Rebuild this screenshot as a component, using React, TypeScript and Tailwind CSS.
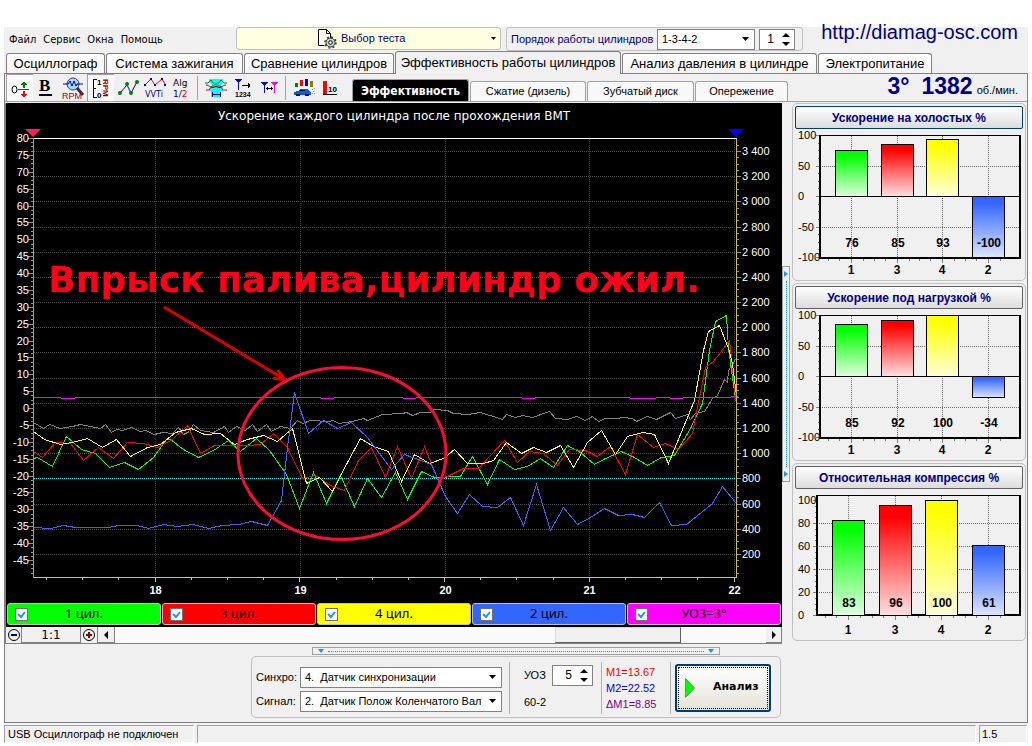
import { useState } from "react";
import type { ReactNode } from "react";
import clsx from "clsx";

const mainTabs = [
  { title: "Осциллограф", width: "w-[99px]" },
  { title: "Система зажигания", width: "w-[137px]" },
  { title: "Сравнение цилиндров", width: "w-[150px]" },
  { title: "Эффективность работы цилиндров", width: "w-[226px]" },
  { title: "Анализ давления в цилиндре", width: "w-[195px]" },
  { title: "Электропитание", width: "w-[114px]" },
];

const subTabs = [
  { title: "Эффективность", width: "w-[117px]" },
  { title: "Сжатие (дизель)", width: "w-[116px]" },
  { title: "Зубчатый диск", width: "w-[107px]" },
  { title: "Опережение", width: "w-[93px]" },
];

const channels = [
  { label: "1 цил.", color: "bg-[#00ff00]" },
  { label: "3 цил.", color: "bg-[#ff0000]" },
  { label: "4 цил.", color: "bg-[#ffff00]" },
  { label: "2 цил.", color: "bg-[#3366ff]" },
  { label: "УОЗ=3°", color: "bg-[#ff00ff]" },
];

const traces = [
  {
    color: "#808080",
    points:
      "33,422 43,428 49,424 60,428 72,426 80,424 100,428 105,424 111,432 116,429 122,430 131,427 140,431 145,430 154,434 162,432 172,433 178,427 183,434 189,431 193,424 200,430 213,432 224,426 228,432 236,426 245,430 252,424 257,431 266,424 271,431 280,426 290,428 297,420 302,423 310,420 328,421 333,420 338,423 352,421 363,418 367,420 382,414 402,413 406,412 412,415 420,412 430,412 433,409 447,410 453,413 467,414 480,412 499,418 502,419 506,414 515,417 522,415 532,417 549,411 555,418 567,419 576,416 585,420 592,416 598,421 605,418 617,418 622,417 632,418 636,421 647,416 656,419 670,412 675,418 687,414 690,419 695,413 704,411 712,398 717,395 724,379 727,382 728,370 735,359",
  },
  {
    color: "#00ff00",
    points:
      "33,458 37,457 52,466 66,436 81,449 95,453 109,467 124,462 138,469 153,457 166,439 170,439 183,449 198,457 213,450 228,440 240,451 256,438 269,450 286,474 299,508 313,472 326,503 340,475 354,506 367,478 381,497 395,472 407,499 421,471 434,477 460,476 472,456 487,484 499,459 514,469 527,466 540,458 553,467 567,445 580,452 594,464 605,458 621,451 634,457 647,465 661,457 674,455 690,428 702,403 709,350 715,321 726,315 728,348 735,398",
  },
  {
    color: "#ff0000",
    points:
      "33,451 42,457 55,442 70,443 83,460 98,447 113,458 127,442 143,443 157,447 172,439 187,425 200,453 214,445 247,445 260,444 273,433 287,447 302,478 315,475 330,485 344,490 358,460 371,447 385,477 397,446 411,478 424,446 437,478 447,476 463,468 478,468 490,455 504,440 517,462 529,451 543,453 557,465 569,449 585,450 597,456 610,446 625,474 637,434 653,447 665,443 678,449 692,433 697,407 705,367 713,361 720,352 729,340 736,405",
  },
  {
    color: "#ffff00",
    points:
      "33,431 44,439 60,444 72,442 87,438 102,447 116,439 130,456 147,447 160,444 175,432 191,428 204,434 220,433 234,444 247,439 263,435 277,441 292,428 306,483 319,477 332,491 347,462 360,438 373,446 388,451 401,481 414,454 429,463 443,458 454,449 467,463 483,463 493,460 506,442 521,453 533,447 546,452 560,445 573,467 587,442 601,430 615,454 627,436 642,432 654,434 668,463 694,400 703,350 708,331 719,325 728,348 732,363 736,395",
  },
  {
    color: "#3366ff",
    points:
      "33,527 50,528 63,525 75,527 108,527 118,525 137,525 148,528 163,524 177,526 193,524 208,528 222,525 238,524 251,521 267,525 281,500 287,447 294,392 308,433 323,420 337,428 351,422 367,437 391,469 404,454 431,464 445,496 457,513 469,494 482,506 497,507 510,497 523,525 536,484 550,530 563,507 577,524 590,517 604,508 618,515 632,514 644,517 659,502 671,525 686,524 712,503 722,486 736,503",
  },
  {
    color: "#ff00ff",
    points:
      "33,397 60,397 61,398 74,398 75,397 320,397 321,398 333,398 334,397 402,397 403,398 415,398 416,397 521,397 522,398 534,398 535,397 629,397 630,398 655,398 656,397 669,397 670,398 682,398 683,397 730,397 731,396 737,396",
  },
];

const leftTicks = Array.from({ length: 26 }, (_, i) => 80 - i * 5);
const rightTicks = Array.from({ length: 17 }, (_, i) => 3400 - i * 200);
const seconds = [18, 19, 20, 21, 22];

const leftY = (value: number) => Math.round(138 + (80 - value) * 3.376) + 0.5;
const rightY = (value: number) => Math.round(151 + (3400 - value) * 0.1259) + 0.5;
const secondX = (value: number) => Math.round(155 + (value - 18) * 144.75) + 0.5;

function formatRpm(value: number) {
  return value >= 1000
    ? `${Math.floor(value / 1000)} ${String(value % 1000).padStart(3, "0")}`
    : String(value);
}

function MainChart() {
  return (
    <svg
      viewBox="6 103 776 499"
      className="block w-full h-auto bg-black font-['Liberation_Sans',sans-serif]"
      role="img"
      aria-label="Ускорение каждого цилиндра после прохождения ВМТ"
    >
      <text
        x="394"
        y="120"
        textAnchor="middle"
        fill="#fff"
        className="text-[12px] font-['DejaVu_Sans',sans-serif]"
      >
        Ускорение каждого цилиндра после прохождения ВМТ
      </text>

      {/* grid */}
      <g strokeDasharray="1 1">
        {rightTicks.map((v) => (
          <line key={v} x1="34" x2="736" y1={rightY(v)} y2={rightY(v)} stroke="#505050" />
        ))}
        {seconds.map((v) => (
          <line key={v} x1={secondX(v)} x2={secondX(v)} y1="139" y2="577" stroke="#383838" />
        ))}
      </g>
      <line x1="34" x2="736" y1="478.5" y2="478.5" stroke="#00ffff" strokeDasharray="1 1" />

      {/* axis ticks */}
      <g stroke="#909090">
        {leftTicks.map((v) => (
          <line key={v} x1="28" x2="33" y1={leftY(v)} y2={leftY(v)} />
        ))}
        {Array.from({ length: 104 }, (_, i) => 80 - i * 1.25).map((v) => (
          <line key={v} x1="31" x2="33" y1={leftY(v)} y2={leftY(v)} />
        ))}
        {rightTicks.map((v) => (
          <line key={v} x1="737" x2="741" y1={rightY(v)} y2={rightY(v)} />
        ))}
        {Array.from({ length: 69 }, (_, i) => 3450 - i * 50).map((v) => (
          <line key={v} x1="737" x2="739" y1={rightY(v)} y2={rightY(v)} />
        ))}
      </g>
      <g fill="#fff" className="text-[11px]">
        {leftTicks.map((v) => (
          <text key={v} x="29" y={leftY(v) + 3.5} textAnchor="end">
            {v}
          </text>
        ))}
        {rightTicks.map((v) => (
          <text key={v} x="742" y={rightY(v) + 3.5}>
            {formatRpm(v)}
          </text>
        ))}
      </g>

      {traces.map((trace) => (
        <polyline
          key={trace.color}
          points={trace.points}
          fill="none"
          stroke={trace.color}
          transform="translate(.5 .5)"
          shapeRendering="crispEdges"
        />
      ))}

      {/* frame and markers */}
      <line x1="33" x2="737" y1="138.5" y2="138.5" stroke="#fff" />
      <line x1="33" x2="737" y1="577.5" y2="577.5" stroke="#c0c0c0" />
      <line x1="33.5" x2="33.5" y1="138" y2="578" stroke="#40d090" />
      <line x1="736.5" x2="736.5" y1="138" y2="578" stroke="#d0c040" />
      <path d="M25 129h16l-8 8z" fill="#ff1f5a" />
      <path d="M728 129h16l-8 8z" fill="#0000ff" />
      <g stroke="#c0c0c0">
        {Array.from({ length: 20 }, (_, i) => 46.5 + Math.round(i * 36.19)).map((x, i) => (
          <line key={x} x1={x} x2={x} y1="578" y2={i % 4 === 3 ? 582 : 580} />
        ))}
      </g>
      <g fill="#fff" textAnchor="middle" className="text-[11px] font-bold">
        {seconds.map((v) => (
          <text key={v} x={secondX(v)} y="594">
            {v}
          </text>
        ))}
      </g>

      {/* annotation */}
      <text
        x="48"
        y="292"
        fill="#ff0018"
        className="text-[36px] font-bold font-['DejaVu_Sans',sans-serif]"
      >
        Впрыск палива,цилиндр ожил.
      </text>
      <path d="M164 307 284 379M273 378l12 2-7-10" fill="none" stroke="#d80000" strokeWidth="3" />
      <ellipse cx="342" cy="453.5" rx="104" ry="86" fill="none" stroke="#ff0a35" strokeWidth="3" />
    </svg>
  );
}

const cylinders = [
  { name: "1", color: "#00ff00", fade: "#e0ffe0" },
  { name: "3", color: "#ff0000", fade: "#ffe0e0" },
  { name: "4", color: "#ffff00", fade: "#ffffd8" },
  { name: "2", color: "#3366ff", fade: "#dde6ff" },
];

type BarPanelProps = {
  id: string;
  title: string;
  values: number[];
  signed?: boolean;
  active?: boolean;
};

function BarPanel({ id, title, values, signed, active }: BarPanelProps) {
  const left = signed ? 25 : 22;
  const bottom = signed ? 127 : 124;
  const zero = signed ? 65 : 124;
  const scale = signed ? 0.61 : 1.15;
  const centers = signed ? [56, 102, 147, 193] : [53, 100, 146, 193];
  const ticks = signed ? [100, 50, 0, -50, -100] : [100, 80, 60, 40, 20, 0];
  const minor = signed ? 12.5 : 5;
  const minorTicks = Array.from({ length: signed ? 17 : 21 }, (_, i) => 100 - i * minor);
  const y = (v: number) => Math.round(zero - v * scale) + 0.5;

  return (
    <section className="border border-[#c0c0c0] rounded-[5px] px-[2px] pt-[2px] h-[178px]">
      <button
        className={clsx(
          "block w-full h-[23px] border rounded-[2px] bg-gradient-to-b from-white to-[#dcdcdc]",
          "font-bold text-[12px] leading-[20px] text-[#000080]",
          active ? "border-[#003c74]" : "border-[#606060]",
        )}
      >
        {title}
      </button>
      <svg
        viewBox="0 -2 228 149"
        className="block w-full h-auto overflow-visible"
        role="img"
        aria-label={title}
      >
        <defs>
          {cylinders.map((c) => (
            <linearGradient key={c.name} id={`${id}-${c.name}`} x1="0" x2="0" y1="0" y2="1">
              <stop offset="0.1" stopColor={c.color} />
              <stop offset="1" stopColor={c.fade} />
            </linearGradient>
          ))}
        </defs>
        <g stroke="#707070" strokeDasharray="1 1">
          {ticks.slice(1).map((v) => (
            <line key={v} x1={left} x2="226" y1={y(v)} y2={y(v)} />
          ))}
          {centers.map((x) => (
            <line key={x} x1={x + 0.5} x2={x + 0.5} y1="5" y2={bottom} />
          ))}
        </g>
        <g stroke="#808080">
          {ticks.map((v) => (
            <line key={v} x1={left - 4} x2={left} y1={y(v)} y2={y(v)} />
          ))}
          {minorTicks.map((v) => (
            <line key={v} x1={left - 2} x2={left} y1={y(v)} y2={y(v)} />
          ))}
          {centers.map((x) => (
            <path
              key={x}
              d={`M${x + 0.5} ${bottom}v5M${x - 11.5} ${bottom}v3M${x + 12.5} ${bottom}v3M${x - 22.5} ${bottom}v3`}
            />
          ))}
        </g>
        <path d={`M${left} 4.5H226`} stroke="#000" />
        <path d={`M${left} 4V${bottom}M${left - 1} ${bottom}H226M225 4V${bottom + 1}`} stroke="#000" strokeWidth="2" />
        {signed && <path d={`M${left} ${y(0)}H225`} stroke="#000" />}
        {values.map((v, i) => (
          <rect
            key={cylinders[i].name}
            x={centers[i] - 15.5}
            y={v < 0 ? y(0) : y(v)}
            width="32"
            height={Math.abs(y(v) - y(0))}
            fill={`url(#${id}-${cylinders[i].name})`}
            stroke="#000"
          />
        ))}
        <g className="text-[11px]">
          {ticks.map((v) => (
            <text key={v} x="3" y={y(v) + 3.5}>
              {v}
            </text>
          ))}
        </g>
        <g textAnchor="middle" className="text-[12px] font-bold">
          {values.map((v, i) => (
            <text key={i} x={centers[i] + 1} y="116">
              {v}
            </text>
          ))}
          {cylinders.map((c, i) => (
            <text key={c.name} x={centers[i]} y="143">
              {c.name}
            </text>
          ))}
        </g>
      </svg>
    </section>
  );
}

function ToolButton({
  label,
  pressed,
  children,
}: {
  label: string;
  pressed?: boolean;
  children: ReactNode;
}) {
  return (
    <button
      aria-label={label}
      className={clsx(
        "w-[27px] h-[27px] shrink-0 flex items-center justify-center",
        pressed && "bg-[#fafafa] border-t border-l border-[#a0a0a0]",
      )}
    >
      <svg viewBox="0 0 24 24" className="size-6" fill="none" stroke="#000" shapeRendering="crispEdges">
        {children}
      </svg>
    </button>
  );
}

function Toolbar() {
  return (
    <div className="flex items-center">
      <ToolButton label="Ноль" pressed>
        <ellipse cx="6.500" cy="13.500" rx="2.500" ry="3.500" shapeRendering="auto" />
        <path d="M10 13.500h11" stroke="#404040" />
        <path d="M15 12h2V9h2V8h-1V7h-1V6h-2v1h-1v1h-1v1h2z" fill="#008000" stroke="none" />
        <path d="M15 15h2v3h2v1h-1v1h-1v1h-2v-1h-1v-1h-1v-1h2z" fill="#f00" stroke="none" />
      </ToolButton>
      <ToolButton label="Жирные линии">
        <text x="4" y="15" fill="#000" stroke="none" className="text-[17px] font-bold font-['Liberation_Serif',serif]">
          B
        </text>
        <path d="M4 19h13" strokeWidth="2" />
      </ToolButton>
      <ToolButton label="Лупа RPM">
        <g shapeRendering="auto">
          <circle cx="11" cy="8" r="6" fill="#a0d8ff" stroke="#404060" />
          <path d="m15 12 6 7" stroke="#333" strokeWidth="3" />
          <path d="M1 8h5l2-3 2 5 2-5 2 5 1-2h6" stroke="#0000a0" />
        </g>
        <text x="0" y="23" fill="#a00000" stroke="none" className="text-[9px]">
          RPM
        </text>
      </ToolButton>
      <ToolButton label="Шкала RPM" pressed>
        <path d="M8 3.500H4.500v18H8M4.500 12.500h2" />
        <text x="8" y="9" fill="#000" stroke="none" className="text-[8px] font-bold">
          1
        </text>
        <text x="8" y="22" fill="#000" stroke="none" className="text-[8px] font-bold">
          0
        </text>
        <text
          transform="translate(14 3) rotate(90)"
          fill="#900000"
          stroke="none"
          className="text-[8px] font-bold"
        >
          RPM
        </text>
      </ToolButton>
      <ToolButton label="Точки">
        <path d="M4 17 11 9l4 8 6-11" stroke="#0000c0" shapeRendering="auto" />
        <g fill="#008000" stroke="none" shapeRendering="auto">
          <circle cx="4" cy="17" r="2" />
          <circle cx="11" cy="8" r="2" />
          <circle cx="15" cy="17" r="2" />
          <circle cx="21" cy="6" r="2" />
        </g>
      </ToolButton>
      <ToolButton label="VVTi">
        <path d="m2 9 6-6 4 6 7-6 3 5" stroke="#f00" shapeRendering="auto" />
        <path d="M1 9h2M7 3h2M11 9h2M18 3h2M21 9h2" stroke="#0000c0" strokeWidth="2" />
        <text x="2" y="21" fill="#000080" stroke="none" className="text-[9px] font-['DejaVu_Sans_Condensed','DejaVu_Sans',sans-serif]">
          VVTi
        </text>
      </ToolButton>
      <ToolButton label="Алгоритм">
        <text x="3" y="10" fill="#000" stroke="none" className="text-[9px] font-['DejaVu_Sans',sans-serif]">
          Alg
        </text>
        <text x="3" y="21" fill="#000080" stroke="none" className="text-[9px] font-['DejaVu_Sans',sans-serif]">
          1/<tspan fill="#f00">2</tspan>
        </text>
      </ToolButton>
      <div className="w-px h-6 bg-[#a0a0a0] ml-[2px] mr-1" />
      <ToolButton label="Окно фаз">
        <path d="M5 3h14v3l-3 3 3 3v3h-2v6H7v-6H5v-3l3-3-3-3z" fill="#00ffff" stroke="none" />
        <g shapeRendering="auto">
          <path d="M1 7h3l3-3 3 4h4l3-4 3 3h3" stroke="#008000" />
          <path d="M2 14h3l3-4h2l2 1 2-1h2l3 4h4" stroke="#f00" />
          <path d="M2 9c4 0 5 5 10 1 5 4 6-1 10-1" stroke="#800000" />
        </g>
        <path d="M8 18.500h9M8.500 16v5M16.500 16v5" stroke="#0000a0" />
      </ToolButton>
      <ToolButton label="Нумерация">
        <path d="M4 3.500h7M5 4.500h5M6 5.500h3M7.500 5v9" stroke="#00f" />
        <path d="M11 9.500h8M17.500 7v5M18.500 8v3" />
        <text x="4" y="21" fill="#000" stroke="none" className="text-[7px] font-bold">
          1234
        </text>
      </ToolButton>
      <ToolButton label="Интервал">
        <path d="M3 6.500h7M4 7.500h5M5 8.500h3M6.500 7v10" stroke="#00f" />
        <path d="M13 6.500h7M14 7.500h5M15 8.500h3M16.500 7v10" stroke="#f0f" />
        <path d="M8 12.500h7M9.500 11v3M13.500 11v3" />
      </ToolButton>
      <div className="w-px h-6 bg-[#a0a0a0] ml-[2px] mr-1" />
      <ToolButton label="Разгон">
        <g stroke="none">
          <path d="M3 7h3v4H3z" fill="#008000" />
          <path d="M8 4h3v6H8z" fill="#f00" />
          <path d="M13 3h3v7h-3z" fill="#00f" />
          <path d="M18 5h3v6h-3z" fill="#808000" />
          <path d="M2 16l4-1 2-2h7l3 3h1v3H2z" fill="#0060e0" />
          <path d="M4 18h4v2H4zM13 18h4v2h-4zM8 14h5v1H8z" fill="#000040" />
          <path d="M20 13h1v1h-1zM22 12h1v1h-1zM21 15h1v1h-1zM20 17h1v1h-1zM22 17h1v1h-1z" fill="#909090" />
        </g>
      </ToolButton>
      <ToolButton label="Уровень">
        <path d="M4 5h4v13H4z" fill="#f00" stroke="none" />
        <path d="M4 18.500h14" />
        <text x="9" y="16" fill="#000" stroke="none" className="text-[8px] font-bold">
          10
        </text>
      </ToolButton>
    </div>
  );
}

function SelectBox({
  id,
  options,
  className,
}: {
  id: string;
  options: string[];
  className: string;
}) {
  return (
    <div className={clsx("relative", className)}>
      <select
        id={id}
        className="appearance-none w-full h-full border border-[#828282] bg-white pl-1 pr-[18px] text-[11px] overflow-hidden text-clip"
      >
        {options.map((option) => (
          <option key={option}>{option}</option>
        ))}
      </select>
      <svg viewBox="0 0 7 4" className="absolute right-[6px] top-2 w-[7px] h-1 pointer-events-none">
        <path d="M0 0h7L3.500 4z" />
      </svg>
    </div>
  );
}

function Spinner({ id, value, label, className }: { id?: string; value: string; label?: string; className: string }) {
  return (
    <div className={clsx("flex border border-[#828282] bg-white items-center pr-1", className)}>
      <input
        id={id}
        aria-label={label}
        defaultValue={value}
        className="min-w-0 flex-1 bg-transparent text-right pr-2 text-[12px]"
      />
      <div className="flex flex-col gap-1">
        <button type="button" aria-label="Больше" className="h-[5px] flex items-center">
          <svg viewBox="0 0 8 4" className="w-2 h-1">
            <path d="M0 4h8L4 0z" />
          </svg>
        </button>
        <button type="button" aria-label="Меньше" className="h-[5px] flex items-center">
          <svg viewBox="0 0 8 4" className="w-2 h-1">
            <path d="M0 0h8L4 4z" />
          </svg>
        </button>
      </div>
    </div>
  );
}

function ZoomIcon({ plus }: { plus?: boolean }) {
  return (
    <svg viewBox="0 0 14 14" className="size-[14px]" fill="none">
      <circle cx="7" cy="7" r="5.500" stroke="#000" />
      <path
        d={plus ? "M4 7h6M7 4v6" : "M4 7h6"}
        stroke={plus ? "#800000" : "#000080"}
        strokeWidth="2"
      />
    </svg>
  );
}

export default function App() {
  const [tab, setTab] = useState(3);
  const [subTab, setSubTab] = useState(0);

  return (
    <div className="bg-white pt-[27px] pb-1 px-1 font-['Liberation_Sans',Arial,sans-serif] text-black">
      <div className="bg-[#f0f0f0]">
        <header className="flex h-6 text-[11px]">
          <nav className="flex items-center gap-[7px] pl-[5px] pt-[3px] w-[232px] font-['DejaVu_Sans_Condensed','DejaVu_Sans',sans-serif]">
            <button>Файл</button>
            <button>Сервис</button>
            <button>Окна</button>
            <button>Помощь</button>
          </nav>
          <button className="flex items-center w-[265px] h-[23px] border border-[#c0c0c0] rounded-[3px] bg-[#ffffe1] pl-20 pr-1 text-[11px] text-[#000080]">
            <svg viewBox="0 0 20 20" className="size-5 mr-1" fill="none" stroke="#000">
              <path d="M1.500.5h8l4 4v6M1.500.5v16h6M9.500.5v4h4" fill="#fff" />
              <circle cx="13.500" cy="13.500" r="4.500" fill="#c8d0c8" stroke="#333" />
              <circle cx="13.500" cy="13.500" r="5.500" strokeDasharray="2 2.300" stroke="#333" strokeWidth="1.500" />
              <circle cx="13.500" cy="13.500" r="1.800" fill="#fff" />
            </svg>
            Выбор теста
            <svg viewBox="0 0 5 3" className="w-[5px] h-[3px] ml-auto">
              <path d="M0 0h5L2.500 3z" />
            </svg>
          </button>
          <div className="flex items-center w-[297px] h-6 ml-[5px] border border-[#c0c0c0] rounded-[3px] pl-1 text-[#000080]">
            <label htmlFor="order" className="w-[146px] text-[11px] whitespace-nowrap">
              Порядок работы цилиндров
            </label>
            <SelectBox id="order" options={["1-3-4-2"]} className="w-[98px] h-[21px] text-black" />
            <Spinner value="1" label="Первый цилиндр" className="w-9 h-[21px] ml-1 text-black" />
          </div>
          <a
            href="http://diamag-osc.com"
            className="ml-auto mr-[10px] -mt-[7px] text-[20px] leading-6 text-[#000080]"
          >
            http://diamag-osc.com
          </a>
        </header>

        <div role="tablist" className="flex items-end h-[23px] pl-[2px] gap-px border-b border-[#808080]">
          {mainTabs.map(({ title, width }, i) => (
            <button
              key={title}
              role="tab"
              aria-selected={i === tab}
              onClick={() => setTab(i)}
              className={clsx(
                width,
                "border border-b-0 border-[#808080] rounded-t-[3px] text-[13px] whitespace-nowrap flex justify-center items-center",
                i === tab ? "h-[23px] -mb-px bg-[#f0f0f0]" : "h-5 bg-gradient-to-b from-white to-[#f4f4f4]",
              )}
            >
              {title}
            </button>
          ))}
        </div>

        <div className="border-l border-r border-[#808080]">
          <div className="flex items-end h-7 border-b border-[#a0a0a0] pl-px">
            <Toolbar />
            <div role="tablist" className="flex items-end gap-px ml-2">
              {subTabs.map(({ title, width }, i) => (
                <button
                  key={title}
                  role="tab"
                  aria-selected={i === subTab}
                  onClick={() => setSubTab(i)}
                  className={clsx(
                    width,
                    "border border-b-0 border-[#a0a0a0] rounded-t-[3px] whitespace-nowrap",
                    i === subTab
                      ? "h-[22px] bg-black text-white text-[12px] font-bold font-['DejaVu_Sans_Condensed','DejaVu_Sans',sans-serif]"
                      : "h-5 bg-[#f8f8f8] text-[11px]",
                  )}
                >
                  {title}
                </button>
              ))}
            </div>
            <div className="flex items-baseline ml-auto mr-[9px] self-center font-bold text-[23px] leading-6 text-[#000080]">
              <span className="mr-3">3°</span>
              <span className="mr-1">1382</span>
              <span className="text-[11px] font-normal text-black">об./мин.</span>
            </div>
          </div>

          <main className="flex pt-px">
            <div className="flex-1 min-w-0 border-l border-b border-[#808080]">
              <MainChart />
              <div className="grid grid-cols-5 gap-px bg-black p-px h-[25px]">
                {channels.map(({ label, color }) => (
                  <label
                    key={label}
                    className={clsx(
                      "flex items-center border border-[#c0c0c0] rounded-[3px] pl-[7px] text-[13px] h-[22px]",
                      "font-['Noto_Sans',sans-serif]",
                      color,
                    )}
                  >
                    <input
                      type="checkbox"
                      defaultChecked
                      className="peer appearance-none size-[13px] bg-white border border-[#707070]"
                    />
                    <svg viewBox="0 0 13 13" className="size-[13px] -ml-[13px] hidden peer-checked:block pointer-events-none">
                      <path d="m3 6 3 3 4-5" fill="none" stroke="#1e90ff" strokeWidth="2" />
                    </svg>
                    <span className="flex-1 text-center pr-5">{label}</span>
                  </label>
                ))}
              </div>
              <div className="flex h-4 bg-[#fafafa] text-[12px]">
                <button aria-label="Уменьшить" className="w-4 flex items-center justify-center border-r border-[#808080] bg-[#f0f0f0]">
                  <ZoomIcon />
                </button>
                <span className="w-[59px] text-center leading-[17px] border-r border-b border-[#808080] bg-[#f0f0f0] font-['DejaVu_Sans',sans-serif]">
                  1:1
                </span>
                <button aria-label="Увеличить" className="w-[17px] flex items-center justify-center border-r border-[#808080] bg-[#f0f0f0]">
                  <ZoomIcon plus />
                </button>
                <button aria-label="Влево" className="w-[17px] flex items-center justify-center border-r border-b border-[#808080] bg-[#f0f0f0]">
                  <svg viewBox="0 0 4 8" className="w-1 h-2">
                    <path d="M4 0v8L0 4z" />
                  </svg>
                </button>
                <div className="flex-1 flex justify-end pr-[85px]">
                  <div className="w-[126px] bg-[#f0f0f0] border border-[#d8d8d8] border-r-[#606060] border-b-[#606060]" />
                </div>
                <button aria-label="Вправо" className="w-4 flex items-center justify-center border-r border-b border-[#808080] bg-[#f0f0f0]">
                  <svg viewBox="0 0 4 8" className="w-1 h-2">
                    <path d="M0 0v8l4-4z" />
                  </svg>
                </button>
              </div>
            </div>

            <div className="w-2 shrink-0 self-center h-[216px] border border-[#a0a0a0] flex flex-col items-center justify-between py-1">
              <svg viewBox="0 0 4 6" className="w-1 h-[6px]" fill="#1e90ff">
                <path d="M0 0v6l4-3z" />
              </svg>
              <div className="flex-1 my-1 border-l border-dotted border-[#1e90ff]" />
              <svg viewBox="0 0 4 6" className="w-1 h-[6px]" fill="#1e90ff">
                <path d="M0 0v6l4-3z" />
              </svg>
            </div>

            <aside className="w-[234px] shrink-0 ml-[2px] mr-px flex flex-col gap-[2px]">
              <BarPanel id="idle" title="Ускорение на холостых %" values={[76, 85, 93, -100]} signed active />
              <BarPanel id="load" title="Ускорение под нагрузкой %" values={[85, 92, 100, -34]} signed />
              <BarPanel id="compression" title="Относительная компрессия %" values={[83, 96, 100, 61]} />
            </aside>
          </main>

          <div className="mx-auto w-[408px] h-2 mt-[3px] mb-px border border-[#a0a0a0] flex items-center px-[5px] gap-1">
            <svg viewBox="0 0 6 4" className="w-[6px] h-1" fill="#1e90ff">
              <path d="M0 0h6L3 4z" />
            </svg>
            <div className="flex-1 border-t border-dotted border-[#1e90ff]" />
            <svg viewBox="0 0 6 4" className="w-[6px] h-1" fill="#1e90ff">
              <path d="M0 0h6L3 4z" />
            </svg>
          </div>

          <form className="flex items-center w-[530px] h-[62px] ml-[246px] border border-[#c0c0c0] rounded-[5px] pl-1 pr-2 text-[11px] pt-[5px]">
            <div className="grid grid-cols-[44px_202px] gap-y-[3px] items-center">
              <label htmlFor="sync">Синхро:</label>
              <SelectBox id="sync" options={["4.\u00a0\u00a0Датчик синхронизации"]} className="h-[21px]" />
              <label htmlFor="signal">Сигнал:</label>
              <SelectBox id="signal" options={["2.\u00a0\u00a0Датчик Полож Коленчатого Вал"]} className="h-[21px]" />
            </div>
            <div className="w-px h-[52px] bg-[#b0b0b0] ml-[7px] -mt-1" />
            <div className="grid grid-cols-[28px_41px] gap-y-2 items-center ml-[14px] -mt-1">
              <label htmlFor="advance">УОЗ</label>
              <Spinner id="advance" value="5" className="h-[21px]" />
              <span className="col-span-2">60-2</span>
            </div>
            <div className="w-px h-[52px] bg-[#b0b0b0] ml-2 -mt-1" />
            <div className="ml-1 w-[62px] leading-4 -mt-1">
              <p className="text-[#ff0000]">M1=13.67</p>
              <p className="text-[#0000ff]">M2=22.52</p>
              <p className="text-[#800080]">ΔM1=8.85</p>
            </div>
            <div className="w-px h-[52px] bg-[#b0b0b0] ml-[2px] -mt-1" />
            <button
              type="button"
              className="flex items-center w-24 h-12 ml-1 -mt-1 border-2 border-[#003c74] rounded-[3px] bg-gradient-to-b from-white to-[#e4e4d8] p-px"
            >
              <span className="flex items-center w-full h-full border border-dotted border-black pl-[6px] gap-[18px] font-bold text-[11px] font-['DejaVu_Sans',sans-serif]">
                <svg viewBox="0 0 10 20" className="w-[10px] h-5">
                  <path d="M.5.5v19l9-9.500z" fill="#00ff00" stroke="#808080" />
                </svg>
                Анализ
              </span>
            </button>
          </form>
          <div className="h-1" />
        </div>

        <footer className="flex gap-[3px] border-t border-[#808080] pt-[2px] pr-px text-[11px] h-[21px]">
          <div className="w-[190px] border border-[#a0a0a0] border-r-white border-b-white pl-[3px] leading-[17px]">
            USB Осциллограф не подключен
          </div>
          <div className="flex-1 border border-[#a0a0a0] border-r-white border-b-white" />
          <div className="w-12 border border-[#a0a0a0] border-r-white border-b-white pl-[2px] leading-[17px]">1.5</div>
        </footer>
      </div>
    </div>
  );
}
